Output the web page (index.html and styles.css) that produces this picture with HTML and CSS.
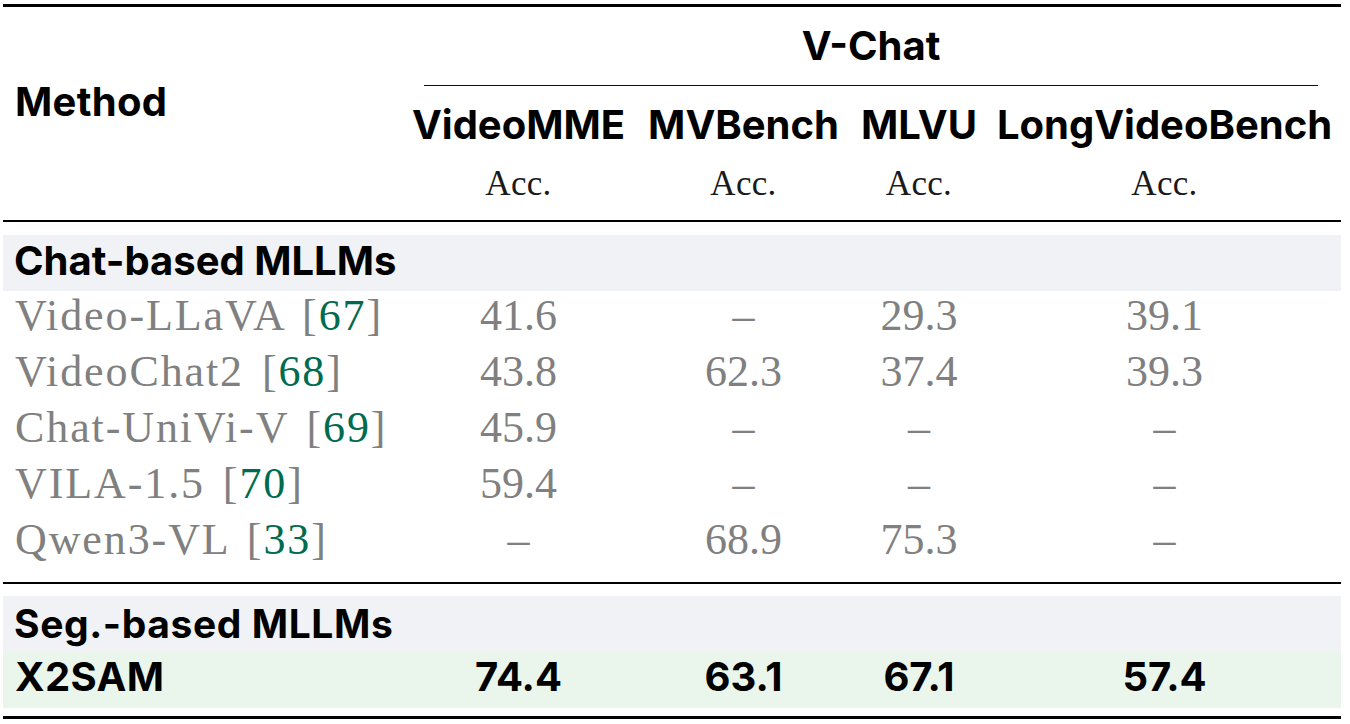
FILE: index.html
```html
<!DOCTYPE html>
<html lang="en">
<head>
<meta charset="utf-8">
<title>V-Chat results</title>
<link rel="stylesheet" href="styles.css">
</head>
<body>
<div class="tbl">
  <div class="rule rule-thick"></div>
  <div class="head">
    <div class="h-method">Method</div>
    <div class="h-group"><div class="h-group-label">V-Chat</div></div>
    <div class="h-bench">VideoMME</div>
    <div class="h-bench">MVBench</div>
    <div class="h-bench">MLVU</div>
    <div class="h-bench">LongVideoBench</div>
    <div class="h-metric">Acc.</div>
    <div class="h-metric">Acc.</div>
    <div class="h-metric">Acc.</div>
    <div class="h-metric">Acc.</div>
  </div>
  <div class="rule rule-mid"></div>
  <div class="gap gap-13"></div>
  <div class="band band-gray band-chat">Chat-based MLLMs</div>
  <div class="row">
    <div class="c-name">Video-LLaVA [<span class="cite">67</span>]</div>
    <div class="c-num">41.6</div><div class="c-num">–</div><div class="c-num">29.3</div><div class="c-num">39.1</div>
  </div>
  <div class="row">
    <div class="c-name">VideoChat2 [<span class="cite">68</span>]</div>
    <div class="c-num">43.8</div><div class="c-num">62.3</div><div class="c-num">37.4</div><div class="c-num">39.3</div>
  </div>
  <div class="row">
    <div class="c-name">Chat-UniVi-V [<span class="cite">69</span>]</div>
    <div class="c-num">45.9</div><div class="c-num">–</div><div class="c-num">–</div><div class="c-num">–</div>
  </div>
  <div class="row">
    <div class="c-name">VILA-1.5 [<span class="cite">70</span>]</div>
    <div class="c-num">59.4</div><div class="c-num">–</div><div class="c-num">–</div><div class="c-num">–</div>
  </div>
  <div class="row">
    <div class="c-name">Qwen3-VL [<span class="cite">33</span>]</div>
    <div class="c-num">–</div><div class="c-num">68.9</div><div class="c-num">75.3</div><div class="c-num">–</div>
  </div>
  <div class="gap gap-11"></div>
  <div class="rule rule-mid"></div>
  <div class="gap gap-12"></div>
  <div class="band band-gray band-seg">Seg.-based MLLMs</div>
  <div class="row row-ours">
    <div class="c-name">X2SAM</div>
    <div class="c-num">74.4</div><div class="c-num">63.1</div><div class="c-num">67.1</div><div class="c-num">57.4</div>
  </div>
  <div class="gap gap-8"></div>
  <div class="rule rule-thick"></div>
</div>
</body>
</html>
```

FILE: styles.css
```css
html, body {
  margin: 0;
  padding: 0;
  background: #ffffff;
}

.tbl {
  width: 1338px;
  margin: 4px 0 0 3px;
  --cols: 397px 237px 213px 138px 353px;
}

.rule { background: #000; }
.rule-thick { height: 3px; }
.rule-mid { height: 2px; }

.gap-13 { height: 13px; }
.gap-11 { height: 11px; }
.gap-12 { height: 12px; }
.gap-8 { height: 8px; }

/* ---------- header ---------- */
.head {
  display: grid;
  grid-template-columns: var(--cols);
  grid-template-rows: 79px 77px 57px;
  font-family: Inter, "Liberation Sans", sans-serif;
  font-weight: 700;
  font-size: 40px;
  color: #000;
}

.h-method {
  grid-row: 1 / 4;
  grid-column: 1;
  padding: 71px 0 0 12px;
  line-height: 48px;
  letter-spacing: 0.3px;
}

.h-group {
  grid-row: 1;
  grid-column: 2 / 6;
  display: flex;
  flex-direction: column;
}

.h-group-label {
  height: 78px;
  line-height: 78px;
  text-align: center;
  margin: 0 23px 0 24px;
  border-bottom: 1px solid #111;
}

.h-bench {
  grid-row: 2;
  line-height: 77px;
  text-align: center;
  white-space: nowrap;
}

.h-metric {
  grid-row: 3;
  font-family: "Liberation Serif", "Times New Roman", serif;
  font-weight: 400;
  font-size: 35px;
  line-height: 41px;
  padding-bottom: 16px;
  text-align: center;
  color: #1a1a1a;
  letter-spacing: 0.3px;
}

/* ---------- body ---------- */
.band {
  height: 56px;
  line-height: 52px;
  padding: 0 0 4px 11px;
  box-sizing: border-box;
  font-family: Inter, "Liberation Sans", sans-serif;
  font-weight: 700;
  font-size: 40px;
  color: #000;
}

.band-gray { background: #f1f2f6; }
.band-seg {
  line-height: 56px;
  padding-bottom: 0;
  font-size: 39px;
  letter-spacing: 0.6px;
}

.row {
  display: grid;
  grid-template-columns: var(--cols);
  height: 56px;
  box-sizing: border-box;
  padding-bottom: 6px;
  line-height: 50px;
  font-family: "Liberation Serif", "Times New Roman", serif;
  font-size: 44px;
  color: #808080;
}

.c-name {
  padding-left: 12px;
  white-space: nowrap;
  letter-spacing: 1.9px;
  word-spacing: 5px;
}

.c-num {
  text-align: center;
}

.cite { color: #006b4f; }

.row-ours {
  background: #eaf5ec;
  font-family: Inter, "Liberation Sans", sans-serif;
  font-weight: 700;
  font-size: 40px;
  color: #000;
  padding-bottom: 6px;
}

.row-ours .c-name {
  letter-spacing: 0.4px;
  word-spacing: 0;
}
```
